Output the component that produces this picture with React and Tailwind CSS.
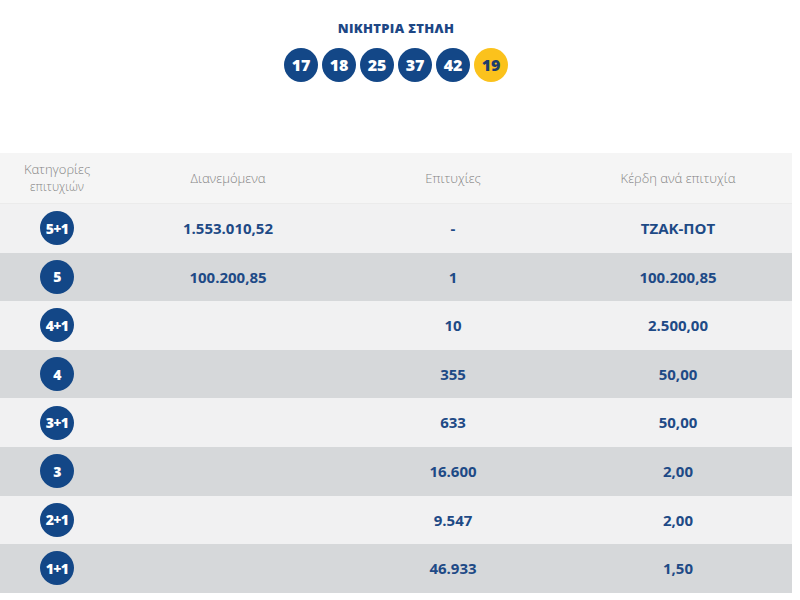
import React from 'react';

const winning = [17, 18, 25, 37, 42];
const joker = 19;

const rows = [
  { cat: '5+1', pool: '1.553.010,52', winners: '-', prize: 'ΤΖΑΚ-ΠΟΤ' },
  { cat: '5', pool: '100.200,85', winners: '1', prize: '100.200,85' },
  { cat: '4+1', pool: '', winners: '10', prize: '2.500,00' },
  { cat: '4', pool: '', winners: '355', prize: '50,00' },
  { cat: '3+1', pool: '', winners: '633', prize: '50,00' },
  { cat: '3', pool: '', winners: '16.600', prize: '2,00' },
  { cat: '2+1', pool: '', winners: '9.547', prize: '2,00' },
  { cat: '1+1', pool: '', winners: '46.933', prize: '1,50' },
];

const Ball = ({ n, yellow }) => (
  <div
    className={
      'w-[34px] h-[34px] rounded-full flex items-center justify-center text-[16px] font-extrabold ' +
      (yellow ? 'bg-[#fbc21c] text-[#1f3d6b]' : 'bg-[#134787] text-white')
    }
  >
    {n}
  </div>
);

const App = () => {
  return (
    <div className="w-[792px] bg-white font-['Open_Sans',sans-serif]">
      <div className="flex flex-col items-center pt-[18px] h-[153px]">
        <h3 className="text-[13px] font-extrabold text-[#1d4785] tracking-wide leading-5">ΝΙΚΗΤΡΙΑ ΣΤΗΛΗ</h3>
        <div className="flex gap-[4px] mt-[10px]">
          {winning.map((n) => (
            <Ball key={n} n={n} />
          ))}
          <Ball n={joker} yellow />
        </div>
      </div>

      <div className="grid grid-cols-[114px_228px_222px_228px] h-[51px] bg-[#f5f5f5] border-b border-[#ebebeb] text-[13px] font-light text-[#858585] items-center text-center leading-[17px]">
        <div>
          Κατηγορίες
          <br />
          <span className="text-[12px]">επιτυχιών</span>
        </div>
        <div>Διανεμόμενα</div>
        <div>Επιτυχίες</div>
        <div>Κέρδη ανά επιτυχία</div>
      </div>

      {rows.map((r, i) => (
        <div
          key={r.cat}
          className={
            'grid grid-cols-[114px_228px_222px_228px] h-[48.6px] items-center text-center text-[15px] font-bold text-[#1e4a86] ' +
            (i % 2 === 0 ? 'bg-[#f1f1f2]' : 'bg-[#d6d8da]')
          }
        >
          <div className="flex justify-center">
            <div className="w-[34px] h-[34px] rounded-full bg-[#134787] text-white text-[14px] font-extrabold flex items-center justify-center tracking-tighter">
              {r.cat}
            </div>
          </div>
          <div>{r.pool}</div>
          <div>{r.winners}</div>
          <div>{r.prize}</div>
        </div>
      ))}
    </div>
  );
};

export default App;
